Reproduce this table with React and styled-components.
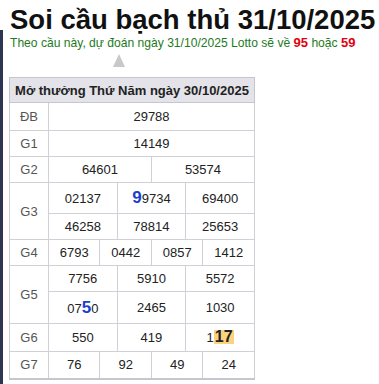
import React from 'react'
import styled, { createGlobalStyle } from 'styled-components'

const GlobalStyle = createGlobalStyle`
    body {
        margin: 0;
        background: #fff;
        font-family: "Liberation Sans", Arial, sans-serif;
    }
`

const Hit = styled.span`
    color: #1b3fd1;
    font-weight: bold;
    font-size: 17px;
`

const Hot = styled.span`
    background: #fdd27c;
    font-weight: bold;
    font-size: 16px;
    line-height: 14px;
    display: inline-block;
    padding: 0 1px;
`

const prizes = [
    { label: 'ĐB', rows: [{ h: 28, cells: ['29788'] }] },
    { label: 'G1', rows: [{ h: 26, cells: ['14149'] }] },
    { label: 'G2', rows: [{ h: 26, cells: ['64601', '53574'] }] },
    {
        label: 'G3', rows: [
            { h: 31, cells: ['02137', <><Hit>9</Hit>9734</>, '69400'] },
            { h: 26, cells: ['46258', '78814', '25653'] },
        ]
    },
    { label: 'G4', rows: [{ h: 26, cells: ['6793', '0442', '0857', '1412'] }] },
    {
        label: 'G5', rows: [
            { h: 26, cells: ['7756', '5910', '5572'] },
            { h: 32, cells: [<>07<Hit>5</Hit>0</>, '2465', '1030'] },
        ]
    },
    { label: 'G6', rows: [{ h: 28, cells: ['550', '419', <>1<Hot>17</Hot></>] }] },
    { label: 'G7', rows: [{ h: 27, cells: ['76', '92', '49', '24'] }] },
]

export default function App() {
    return (
        <Page>
            <GlobalStyle />
            <Title>Soi cầu bạch thủ 31/10/2025</Title>
            <Panel>
                <Lead>
                    Theo cầu này, dự đoán ngày 31/10/2025 Lotto sẽ về <Red>95</Red> hoặc <Red>59</Red>
                </Lead>
                <Arrow />
                <Table>
                    <colgroup>
                        <col style={{ width: 39 }} />
                        {Array.from({ length: 12 }).map((_, i) => <col key={i} />)}
                    </colgroup>
                    <tbody>
                        <Row $h={25}>
                            <HeadCell colSpan={13}>Mở thưởng Thứ Năm ngày 30/10/2025</HeadCell>
                        </Row>
                        {prizes.map(prize => prize.rows.map((row, ri) => (
                            <Row key={prize.label + ri} $h={row.h}>
                                {ri === 0 && <LabelCell rowSpan={prize.rows.length}>{prize.label}</LabelCell>}
                                {row.cells.map((c, ci) => (
                                    <Cell key={ci} colSpan={12 / row.cells.length}>{c}</Cell>
                                ))}
                            </Row>
                        )))}
                    </tbody>
                </Table>
            </Panel>
        </Page>
    )
}

const Page = styled.div`
    padding-top: 10px;
    height: 374px;
    display: flex;
    flex-direction: column;
`

const Title = styled.h1`
    margin: 0 0 0 10px;
    font-size: 27.5px;
    line-height: 20px;
    font-weight: bold;
    color: #111;
`

const Panel = styled.div`
    flex: 1;
    border-left: 3px solid #2c3652;
    padding: 5px 0 0 7px;
`

const Lead = styled.div`
    font-size: 12.1px;
    line-height: 16px;
    color: #1d7a1d;
`

const Red = styled.span`
    color: #e3000f;
    font-weight: bold;
    font-size: 13px;
`

const Arrow = styled.div`
    width: 0;
    height: 0;
    margin: 3px 0 0 103px;
    border-left: 6px solid transparent;
    border-right: 6px solid transparent;
    border-bottom: 13px solid #c8c8c8;
`

const Table = styled.table`
    margin: 10px 0 0 -1px;
    width: 246px;
    table-layout: fixed;
    border-collapse: collapse;
    border: 1px solid #c6c6ce;
    border-bottom: 2px solid #c6c6ce;
    font-size: 13px;
    color: #222;
`

const Row = styled.tr`
    height: ${p => p.$h}px;
`

const HeadCell = styled.td`
    background: #e3e3e9;
    font-weight: bold;
    text-align: center;
    padding: 0;
    border: 1px solid #c6c6ce;
`

const LabelCell = styled.td`
    text-align: center;
    color: #555;
    padding: 0;
    border: 1px solid #d0d0d6;
`

const Cell = styled.td`
    text-align: center;
    padding: 0;
    border: 1px solid #d0d0d6;
    white-space: nowrap;
`
